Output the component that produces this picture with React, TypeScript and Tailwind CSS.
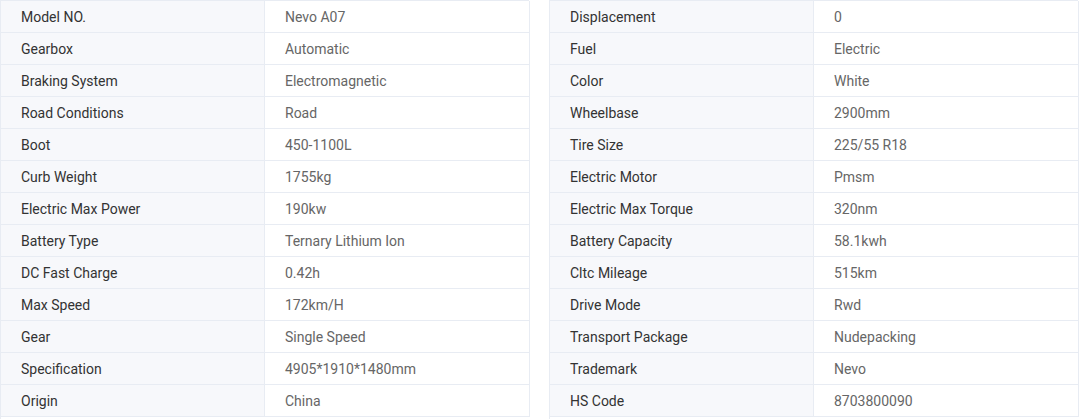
const left: [string, string][] = [
  ["Model NO.", "Nevo A07"],
  ["Gearbox", "Automatic"],
  ["Braking System", "Electromagnetic"],
  ["Road Conditions", "Road"],
  ["Boot", "450-1100L"],
  ["Curb Weight", "1755kg"],
  ["Electric Max Power", "190kw"],
  ["Battery Type", "Ternary Lithium Ion"],
  ["DC Fast Charge", "0.42h"],
  ["Max Speed", "172km/H"],
  ["Gear", "Single Speed"],
  ["Specification", "4905*1910*1480mm"],
  ["Origin", "China"],
];

const right: [string, string][] = [
  ["Displacement", "0"],
  ["Fuel", "Electric"],
  ["Color", "White"],
  ["Wheelbase", "2900mm"],
  ["Tire Size", "225/55 R18"],
  ["Electric Motor", "Pmsm"],
  ["Electric Max Torque", "320nm"],
  ["Battery Capacity", "58.1kwh"],
  ["Cltc Mileage", "515km"],
  ["Drive Mode", "Rwd"],
  ["Transport Package", "Nudepacking"],
  ["Trademark", "Nevo"],
  ["HS Code", "8703800090"],
];

function SpecTable({ rows }: { rows: [string, string][] }) {
  return (
    <div className="w-[529px] border-t border-l border-[#e8ecf3]">
      {rows.map(([label, value]) => (
        <div key={label} className="grid grid-cols-[264px_265px]">
          <div className="h-[32px] flex items-center pl-5 pt-[2px] bg-[#f7f8fb] text-[#333333] border-r border-b border-[#e8ecf3]">
            {label}
          </div>
          <div className="h-[32px] flex items-center pl-5 pt-[2px] bg-white text-[#666666] border-r border-b border-[#e8ecf3]">
            {value}
          </div>
        </div>
      ))}
    </div>
  );
}

export default function App() {
  return (
    <div className="w-[1079px] h-[419px] bg-white flex gap-5 text-[14px] font-['Roboto',sans-serif]">
      <SpecTable rows={left} />
      <SpecTable rows={right} />
    </div>
  );
}
